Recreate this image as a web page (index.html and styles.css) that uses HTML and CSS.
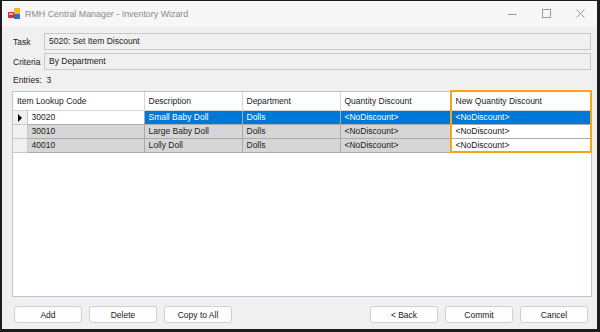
FILE: index.html
```html
<!DOCTYPE html>
<html lang="en">
<head>
    <meta charset="UTF-8">
    <title>RMH Central Manager - Inventory Wizard</title>
    <link rel="stylesheet" href="styles.css">
</head>
<body>
    <div class="janela">
        <div class="barra-titulo">
            <svg class="icone-app" width="13" height="12" viewBox="0 0 13 12">
                <rect x="0" y="4" width="6" height="6" fill="#d9302c"/>
                <rect x="6" y="0" width="6" height="6" fill="#f2b632"/>
                <rect x="6" y="6" width="6" height="5" fill="#2f6fc9"/>
                <rect x="1" y="5" width="4" height="2" fill="#f5a6a0"/>
            </svg>
            <span class="titulo">RMH Central Manager - Inventory Wizard</span>
            <div class="controles">
                <svg width="10" height="10" viewBox="0 0 10 10"><line x1="0" y1="5.5" x2="9" y2="5.5" stroke="#9a9a9a"/></svg>
                <svg width="10" height="10" viewBox="0 0 10 10"><rect x="0.5" y="0.5" width="8" height="8" fill="none" stroke="#9a9a9a"/></svg>
                <svg width="10" height="10" viewBox="0 0 10 10"><path d="M0.5 0.5 L8.5 8.5 M8.5 0.5 L0.5 8.5" stroke="#9a9a9a"/></svg>
            </div>
        </div>

        <div class="conteudo">
            <div class="campo">
                <span class="rotulo">Task</span>
                <div class="caixa">5020: Set Item Discount</div>
            </div>
            <div class="campo">
                <span class="rotulo">Criteria</span>
                <div class="caixa">By Department</div>
            </div>
            <div class="entradas">Entries:&nbsp; 3</div>

            <div class="grade">
                <table>
                    <colgroup>
                        <col class="c0"><col class="c1"><col class="c2"><col class="c3"><col class="c4"><col class="c5">
                    </colgroup>
                    <thead>
                        <tr>
                            <th colspan="2">Item Lookup Code</th>
                            <th>Description</th>
                            <th>Department</th>
                            <th>Quantity Discount</th>
                            <th>New Quantity Discount</th>
                        </tr>
                    </thead>
                    <tbody>
                        <tr class="selecionada">
                            <td class="cabeca-linha"><span class="seta"></span></td>
                            <td class="editando">30020</td>
                            <td>Small Baby Doll</td>
                            <td>Dolls</td>
                            <td>&lt;NoDiscount&gt;</td>
                            <td>&lt;NoDiscount&gt;</td>
                        </tr>
                        <tr>
                            <td class="cabeca-linha"></td>
                            <td>30010</td>
                            <td>Large Baby Doll</td>
                            <td>Dolls</td>
                            <td>&lt;NoDiscount&gt;</td>
                            <td class="nova">&lt;NoDiscount&gt;</td>
                        </tr>
                        <tr>
                            <td class="cabeca-linha"></td>
                            <td>40010</td>
                            <td>Lolly Doll</td>
                            <td>Dolls</td>
                            <td>&lt;NoDiscount&gt;</td>
                            <td class="nova">&lt;NoDiscount&gt;</td>
                        </tr>
                    </tbody>
                </table>
                <div class="destaque"></div>
            </div>

            <div class="botoes">
                <div class="grupo">
                    <button>Add</button>
                    <button>Delete</button>
                    <button>Copy to All</button>
                </div>
                <div class="grupo">
                    <button>&lt; Back</button>
                    <button>Commit</button>
                    <button>Cancel</button>
                </div>
            </div>
        </div>
    </div>
</body>
</html>
```

FILE: styles.css
```css
body {
    margin: 0;
    padding: 0;
    background-color: #1a1a1a;
    font-family: "Liberation Sans", Arial, sans-serif;
    font-size: 8.5px;
    color: #1a1a1a;
}

.janela {
    width: 600px;
    height: 332px;
    box-sizing: border-box;
    border: 2px solid #1c1c1c;
    border-top-width: 1px;
    border-right-width: 3px;
    border-bottom-width: 3px;
    background-color: #f0f0f0;
    display: flex;
    flex-direction: column;
}

.barra-titulo {
    height: 25px;
    display: flex;
    align-items: center;
    background-color: #f7f7f7;
    padding-left: 6px;
}

.icone-app {
    margin-right: 4px;
}

.titulo {
    font-family: "Liberation Sans", Arial, sans-serif;
    font-size: 8.9px;
    color: #8a8a8a;
    flex: 1;
}

.controles {
    display: flex;
    gap: 24px;
    padding-right: 11px;
    margin-top: 1px;
}

.conteudo {
    flex: 1;
    display: flex;
    flex-direction: column;
    padding: 7px 6px 0 10px;
}

.campo {
    display: flex;
    align-items: center;
    height: 17px;
    margin-bottom: 3px;
}

.rotulo {
    width: 31px;
    padding-left: 1px;
}

.caixa {
    flex: 1;
    height: 15px;
    line-height: 15px;
    border: 1px solid #c8c8c8;
    background-color: #f0f0f0;
    padding-left: 4px;
}

.entradas {
    padding-left: 1px;
    height: 14px;
    line-height: 14px;
    margin-bottom: 4px;
}

.grade {
    position: relative;
    width: 578px;
    height: 204px;
    border: 1px solid #b9c4d4;
    background-color: #ffffff;
}

table {
    border-collapse: collapse;
    table-layout: fixed;
    width: 577px;
}

.c0 { width: 14px; }
.c1 { width: 117px; }
.c2 { width: 98px; }
.c3 { width: 98px; }
.c4 { width: 111px; }
.c5 { width: 139px; }

th {
    height: 18px;
    font-weight: normal;
    text-align: left;
    padding: 0 0 0 4px;
    background-color: #ffffff;
    border-right: 1px solid #d5d5d5;
    border-bottom: 1px solid #d5d5d5;
    white-space: nowrap;
}

td {
    height: 13px;
    padding: 0 0 0 4px;
    background-color: #d6d6d6;
    border-right: 1px solid #ababab;
    border-bottom: 1px solid #ababab;
    white-space: nowrap;
    line-height: 13px;
}

td.cabeca-linha {
    padding: 0;
    background-color: #f0f0f0;
    border-right: 1px solid #c8c8c8;
    border-bottom: 1px solid #c8c8c8;
}

.seta {
    display: block;
    width: 0;
    height: 0;
    margin-left: 5px;
    border-top: 4px solid transparent;
    border-bottom: 4px solid transparent;
    border-left: 4px solid #000;
}

.selecionada td {
    background-color: #0078d7;
    color: #ffffff;
}

.selecionada td.cabeca-linha {
    background-color: #f0f0f0;
}

.selecionada td.editando {
    background-color: #ffffff;
    color: #1a1a1a;
}

td.nova {
    background-color: #ffffff;
}

.destaque {
    position: absolute;
    left: 437px;
    top: -2px;
    width: 138px;
    height: 59px;
    border: 2px solid #f5a51c;
}

.botoes {
    display: flex;
    justify-content: space-between;
    margin-top: 9px;
    padding-left: 2px;
    padding-right: 3px;
}

.grupo {
    display: flex;
    gap: 7px;
}

button {
    width: 68px;
    height: 17px;
    padding: 0;
    font-family: "Liberation Sans", Arial, sans-serif;
    font-size: 8.5px;
    color: #1a1a1a;
    background-color: #fdfdfd;
    border: 1px solid #d0d0d0;
    border-radius: 3px;
}
```
